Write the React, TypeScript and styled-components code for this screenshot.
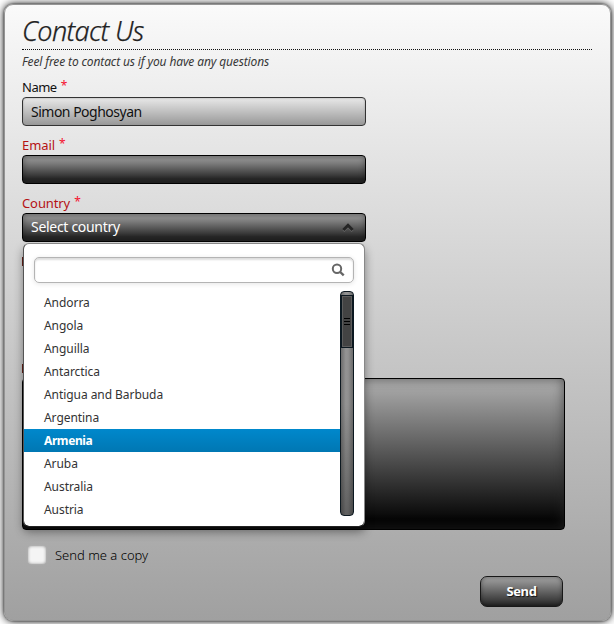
import React from "react";
import styled, { createGlobalStyle } from "styled-components";

const Global = createGlobalStyle`
  * { box-sizing: border-box; }
  body { margin: 0; background: #fff; overflow: hidden; font-family: "Noto Sans", "Open Sans", sans-serif; }
`;

const Page = styled.div`
  height: 624px;
  padding: 4px 3px 3px 4px;
`;

const Panel = styled.main`
  height: 617px;
  padding: 0 18px 0 17px;
  border: 1px solid #949494;
  border-radius: 9px;
  background: linear-gradient(#fafafa, #a0a0a0);
  box-shadow: 0 0 8px #111, 0 0 2px #555;
`;

const Title = styled.h1`
  margin: 0;
  height: 45px;
  padding-top: 6px;
  border-bottom: 1px dotted #111;
  font: italic 300 27px/40px "Noto Sans", sans-serif;
  letter-spacing: -0.65px;
  color: #222;
  -webkit-text-stroke: 0.25px #222;
  white-space: nowrap;
`;

const Intro = styled.p`
  margin: 0;
  height: 27px;
  font: italic 400 12px/24px "Noto Sans", sans-serif;
  letter-spacing: -0.13px;
  color: #383838;
  white-space: nowrap;
`;

const Field = styled.div`
  position: relative;
  width: 344px;
  height: 58px;
`;

const Label = styled.label<{ $invalid?: boolean }>`
  display: flex;
  gap: 4px;
  height: 20px;
  font-size: 13px;
  line-height: 20px;
  letter-spacing: ${(p) => (p.$invalid ? "-0.1px" : "-0.5px")};
  color: ${(p) => (p.$invalid ? "#b51214" : "#111")};
`;

const Required = styled.span`
  color: #f5112e;
  font-size: 12px;
  line-height: 18px;
`;

const Control = styled.div<{ $filled?: boolean }>`
  display: flex;
  align-items: center;
  justify-content: space-between;
  height: 29px;
  padding: 0 11px 1px 8px;
  border: 1px solid ${(p) => (p.$filled ? "#333" : "#000")};
  border-radius: 4px;
  background: ${(p) => (p.$filled ? "linear-gradient(#e8e8e8, #989898)" : "linear-gradient(#8e8e8e 15%, #262626 85%)")};
  box-shadow: inset 0 0 ${(p) => (p.$filled ? "2px #999" : "6px rgba(0,0,0,.35)")};
  color: ${(p) => (p.$filled ? "#111" : "#fff")};
  font-size: 14px;
`;

const Value = styled.span<{ $lifted?: boolean }>`
  padding-bottom: ${(p) => (p.$lifted ? "2px" : "0")};
  letter-spacing: ${(p) => (p.$lifted ? "-0.3px" : "-0.5px")};
`;

const Menu = styled.div`
  position: absolute;
  z-index: 2;
  top: 50px;
  left: 1px;
  width: 342px;
  height: 284px;
  padding: 13px 10px 0 11px;
  border: 1px solid #888;
  border-left-color: #555;
  border-bottom-color: #222;
  border-radius: 6px;
  background: #fff;
  background-clip: padding-box;
  box-shadow: 0 5px 10px rgba(0,0,0,.4);
`;

const Search = styled.div`
  display: flex;
  align-items: center;
  justify-content: flex-end;
  width: 320px;
  height: 26px;
  margin-left: -1px;
  padding-right: 8px;
  border: 1px solid #b4b4b4;
  border-radius: 5px;
  box-shadow: inset 0 2px 2px #ddd, 0 1px 5px #e5e5e5;
`;

const MenuBody = styled.div`
  display: flex;
  height: 233px;
  margin: 8px 0 0 -11px;
`;

const Options = styled.ul`
  width: 316px;
  margin: 0;
  padding: 0;
  list-style: none;
`;

const Option = styled.li<{ $active: boolean }>`
  height: 23px;
  padding-left: 20px;
  background: ${(p) => (p.$active ? "linear-gradient(#0088cc, #0077b3)" : "transparent")};
  color: ${(p) => (p.$active ? "#fff" : "#333")};
  font-size: 12px;
  font-weight: ${(p) => (p.$active ? 700 : 400)};
  line-height: 23px;
  letter-spacing: ${(p) => (p.$active ? "-0.4px" : "-0.06px")};
`;

const Track = styled.div`
  width: 14px;
  height: 225px;
  border: 1px solid #0c1820;
  border-radius: 4px;
  background:
    linear-gradient(rgba(0,0,0,0) 50%, rgba(0,0,0,.35)),
    linear-gradient(90deg, #6c6c6c, #949494 40%, #909090 60%, #6c6c6c);
`;

const Thumb = styled.div`
  display: flex;
  flex-direction: column;
  align-items: center;
  justify-content: center;
  gap: 2px;
  height: 53px;
  margin-top: 3px;
  border: 1px solid #0c1820;
  background: #434343;
  box-shadow: inset 0 0 0 1px #5c5c5c;
`;

const Grip = styled.i`
  width: 6px;
  height: 1px;
  background: #000;
`;

const CoveredRow = styled.div<{ $height: number }>`
  height: ${(p) => p.$height}px;
  padding-top: 6px;
`;

const LabelEdge = styled.i`
  display: block;
  width: 2px;
  height: 9px;
  background: #642018;
`;

const Message = styled.div`
  width: 543px;
  height: 152px;
  border: 1px solid #000;
  border-radius: 4px;
  background: linear-gradient(#b0b0b0, #050505 94%);
  box-shadow: inset 0 0 12px rgba(40,40,40,.65);
`;

const Copy = styled.label`
  display: flex;
  align-items: center;
  gap: 9px;
  height: 18px;
  margin: 16px 0 0 6px;
  font-size: 13px;
  font-weight: 300;
  line-height: 16px;
  color: #000;
`;

const Check = styled.span`
  width: 18px;
  height: 18px;
  border-radius: 4px;
  background: #f4f4f4;
  box-shadow: inset 0 0 3px #999, 0 0 2px #bbb;
`;

const Actions = styled.div`
  display: flex;
  justify-content: flex-end;
  padding: 12px 29px 0 0;
`;

const Button = styled.button`
  width: 83px;
  height: 31px;
  padding: 0 0 1px;
  border: 1px solid #181818;
  border-radius: 7px;
  background: linear-gradient(#a4a4a4, #242424);
  box-shadow: inset 0 0 4px rgba(0,0,0,.4);
  color: #fff;
  font: bold 13px "Noto Sans", sans-serif;
  letter-spacing: -0.35px;
  text-shadow: 1px 1px 1px #111;
`;

const countries = ["Andorra", "Angola", "Anguilla", "Antarctica", "Antigua and Barbuda", "Argentina", "Armenia", "Aruba", "Australia", "Austria"];

const UpArrow = () => (
  <svg width="12" height="10" viewBox="0 0 12 10" fill="none">
    <path d="M1.4 9 6 4.5 10.6 9" stroke="#666" strokeWidth="2.5" />
    <path d="M1.4 8 6 3.3 10.6 8" stroke="#252525" strokeWidth="3" />
  </svg>
);

const SearchIcon = () => (
  <svg width="14" height="14" viewBox="0 0 14 14" fill="none" stroke="#666">
    <circle cx="6" cy="5.8" r="4.2" strokeWidth="2" />
    <path d="m9.2 9 3.5 3.4" strokeWidth="2.4" />
  </svg>
);

const FieldLabel = ({ text, invalid }: { text: string; invalid?: boolean }) => (
  <Label $invalid={invalid}>{text}<Required>*</Required></Label>
);

export default function App() {
  return (
    <Page>
      <Global />
      <Panel>
        <Title>Contact Us</Title>
        <Intro>Feel free to contact us if you have any questions</Intro>
        <Field>
          <FieldLabel text="Name" />
          <Control $filled><Value>Simon Poghosyan</Value></Control>
        </Field>
        <Field>
          <FieldLabel text="Email" invalid />
          <Control />
        </Field>
        <Field>
          <FieldLabel text="Country" invalid />
          <Control><Value $lifted>Select country</Value><UpArrow /></Control>
          <Menu>
            <Search><SearchIcon /></Search>
            <MenuBody>
              <Options>
                {countries.map((name) => <Option key={name} $active={name === "Armenia"}>{name}</Option>)}
              </Options>
              <Track><Thumb><Grip /><Grip /><Grip /></Thumb></Track>
            </MenuBody>
          </Menu>
        </Field>
        <CoveredRow $height={107}><LabelEdge /></CoveredRow>
        <CoveredRow $height={20}><LabelEdge /></CoveredRow>
        <Message />
        <Copy><Check />Send me a copy</Copy>
        <Actions><Button>Send</Button></Actions>
      </Panel>
    </Page>
  );
}
